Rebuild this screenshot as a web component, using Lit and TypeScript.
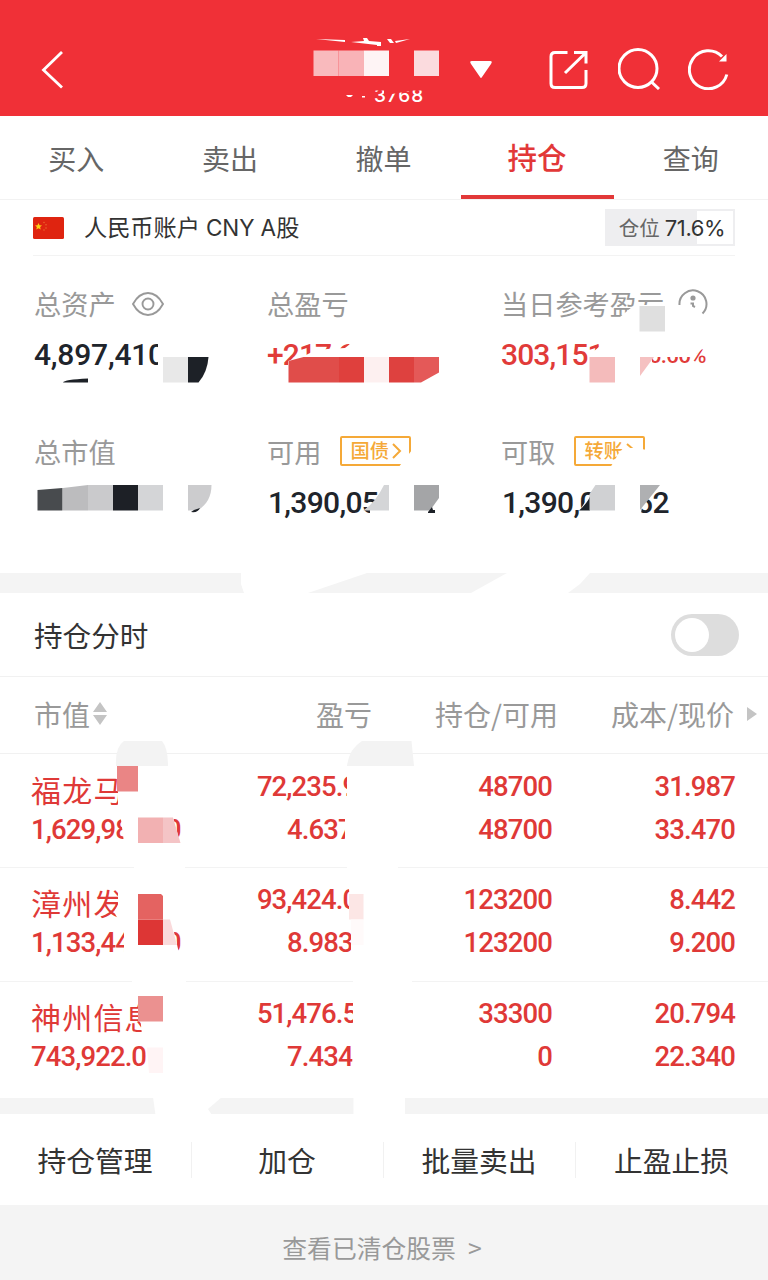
import { LitElement, html, svg, css } from "lit";
import { customElement } from "lit/decorators.js";

interface Holding {
  name: string;
  value: string;
  profit: string;
  rate: string;
  held: string;
  usable: string;
  cost: string;
  price: string;
}

const TABS = ["买入", "卖出", "撤单", "持仓", "查询"];
const ACTIONS = ["持仓管理", "加仓", "批量卖出", "止盈止损"];
const HOLDINGS: Holding[] = [
  { name: "福龙马", value: "1,629,989.00", profit: "72,235.90", rate: "4.637%", held: "48700", usable: "48700", cost: "31.987", price: "33.470" },
  { name: "漳州发", value: "1,133,440.00", profit: "93,424.00", rate: "8.983%", held: "123200", usable: "123200", cost: "8.442", price: "9.200" },
  { name: "神州信息", value: "743,922.0", profit: "51,476.50", rate: "7.434%", held: "33300", usable: "0", cost: "20.794", price: "22.340" },
];

/* Privacy blocks: [x, y, width, height, colour] */
const BLOCKS: [number, number, number, number, string][] = [
  [313.5, 50.5, 25, 25.5, "#f9babd"],
  [338.5, 50.5, 25, 25.5, "#f9b3b7"],
  [363.5, 50.5, 25.5, 25.5, "#fef4f5"],
  [414, 50.5, 25, 25.5, "#fbdbde"],
  [163, 357, 25, 25.5, "#e8e8e8"],
  [639.5, 306, 25.5, 25.5, "#dfdfdf"],
  [589.5, 357, 25.5, 25.5, "#f4bbbb"],
  [113, 485, 25, 25.5, "#1d2026"],
  [138, 485, 25, 25.5, "#d4d5d7"],
  [117, 766, 21, 25.5, "#ea8585"],
  [138, 817.5, 25, 25.5, "#f2b1b2"],
  [138, 919.5, 25, 25.5, "#dd3635"],
  [138, 996, 25, 25.5, "#eb9190"],
  [349, 894, 14.5, 25.5, "#fce6e5"],
  [351, 919.5, 12.5, 25.5, "#fffafa"],
];

const MASKS: string[] = [
  "158,335 240,335 240,384 158,384",
  "150,366 163,366 163,385 150,385",
  "288,361 304,356 312,352 327,349 345,348 350,344 364,342 460,336 460,384 288,384",
  "594,336 735,336 735,344 708,344 693,357 652,357 652,385 583,385 589,357 593,352 600,346 597,342",
  "614,322 632,307 639,305 665,305 690,306 690,332 614,332",
  "370,510 377,500 389,484 414,484 440,484 440,495 433,504 427,520 370,520",
  "580,510 596,485 640,485 640,520 580,520",
  "640,484 660,484 642,507 640,520",
  "241,573 367,573 308,593 244,593 241,584",
  "507,573 590,573 580,584 568,593 471,593",
  "153,1097 155.5,1115 212,1115 208,1109 222,1097",
  "353.5,1097 405,1097 405,1115 353.5,1115",
  "118,766 190,766 190,817 173,817 180,843 124,843 120,812 118,805",
  "134,860 185,860 185,875 134,875",
  "347,766 413,766 413,845 345,845 345,810 347,800",
  "347,860 398,860 398,875 347,875",
  "118,889 190,889 190,932 174,932 179,953 124,953 124,930 114,912 118,905",
  "132,975 186,975 186,990 132,990",
  "349,889 413,889 413,960 351,960 351,925",
  "353,975 412,975 412,1070 352,1070 353,1040",
  "138,996 170,996 170,1035 142,1035",
];

@customElement("app-root")
export class AppRoot extends LitElement {
  static styles = css`
    :host {
      display: block;
      position: relative;
      width: 768px;
      height: 1280px;
      overflow: hidden;
      background: #fff;
      font-family: "Noto Sans CJK SC", sans-serif;
      color: #333;
      line-height: 1;
    }
    * { box-sizing: border-box; }
    svg { display: block; flex: none; }
    .top { height: 116px; background: #f03037; display: flex; align-items: center; padding: 22px 38px 0 39px; color: #fff; }
    .title { flex: 1; display: flex; justify-content: flex-end; align-items: center; gap: 46px; padding-right: 56px; }
    .acct { font: 500 19px Inter, sans-serif; letter-spacing: 0.9px; padding-top: 52px; }
    .tools { display: flex; gap: 28px; }
    .tabs { height: 84px; display: flex; border-bottom: 1px solid #f2f2f2; font-size: 28px; color: #666; }
    .tab { flex: 1; text-align: center; padding: 28px 1px 0 0; border-bottom: 4px solid transparent; }
    .tab.on { color: #e23838; border-color: #e23838; font-size: 29.5px; padding-top: 26px; font-weight: 500; }
    .account { height: 56px; margin: 0 33px; display: flex; align-items: center; border-bottom: 1px solid #f3f3f3; font-size: 23.2px; }
    .account .label { flex: 1; padding-left: 20px; display: flex; align-items: baseline; gap: 6px; }
    .latin { font-family: Inter, sans-serif; font-size: 22.5px; }
    .ratio { width: 130px; height: 37px; border: 2px solid #eeeef0; background: linear-gradient(90deg, #eeeef0 90px, #fff 90px); display: flex; align-items: center; justify-content: center; gap: 5px; padding-left: 4px; font-size: 20.5px; color: #666; }
    .ratio .latin { font-size: 22px; color: #333; letter-spacing: -0.4px; }
    .metrics { height: 317px; padding: 29px 33px 0 34px; display: grid; grid-template-columns: 233px 234px 1fr; grid-template-rows: 148px 1fr; }
    .caption { height: 38px; display: flex; align-items: center; font-size: 27.2px; color: #999; }
    .num { font-family: Roboto, sans-serif; font-weight: 500; white-space: nowrap; }
    .amount { height: 62px; display: flex; align-items: center; font-size: 30px; letter-spacing: -0.7px; color: #20242b; padding: 2px 0 0 1px; }
    .amount.total { letter-spacing: -0.2px; padding-left: 0; }
    .amount.red { color: #e13b39; letter-spacing: -0.9px; padding-left: 0; padding-top: 1px; }
    .pct { font-size: 22px; margin-left: 45px; letter-spacing: -0.5px; padding-top: 3px; }
    .eye { margin-left: 16px; }
    .info { margin-left: 14px; }
    .tag { width: 71px; height: 30px; margin: -3px 0 0 19px; border: 2px solid #f5a938; color: #f5a938; font-size: 19.3px; font-weight: 500; display: flex; align-items: center; padding-left: 8px; gap: 1px; border-radius: 2px; }
    .band { height: 20px; background: #f4f4f4; }
    .band.thin { height: 16px; }
    .minute { height: 84px; border-bottom: 1px solid #f1f1f1; padding: 0 29px 0 34px; display: flex; justify-content: space-between; align-items: center; font-size: 28.6px; }
    .minute span { padding-top: 2px; }
    .switch { width: 68px; height: 42px; border-radius: 21px; background: #ddd; padding: 4px; }
    .knob { width: 34px; height: 34px; border-radius: 50%; background: #fff; }
    .cols { display: grid; grid-template-columns: 166px 175px 180px 183px; padding-left: 31px; }
    .head { height: 77px; padding-bottom: 3px; border-bottom: 1px solid #f1f1f1; align-items: center; font-size: 28px; color: #999; grid-template-columns: 166px 175px 186px 176px 1fr; }
    .head .first { padding-left: 3px; display: flex; align-items: center; gap: 2px; }
    .right { text-align: right; }
    .more { margin-left: 13px; }
    .row { height: 114px; border-bottom: 1px solid #f3f3f3; color: #df3937; font-size: 27.5px; letter-spacing: -0.9px; padding-top: 10px; align-content: start; }
    .row.first { padding-top: 11px; }
    .row.last { height: 116px; border-bottom: 0; }
    .row div { height: 43px; line-height: 43px; }
    .row .name { font-size: 30px; letter-spacing: 1.2px; padding-top: 3px; font-weight: 400; font-family: "Noto Sans CJK SC", sans-serif; }
    .actions { height: 91px; display: grid; grid-template-columns: repeat(4, 1fr); font-size: 28.8px; align-items: center; }
    .actions div { height: 36px; line-height: 36px; text-align: center; border-right: 1px solid #f1f1f1; padding-right: 1px; }
    .actions div:last-child { border: 0; }
    .foot { height: 76px; background: #f4f4f4; color: #999; display: flex; justify-content: center; align-items: center; gap: 12px; font-size: 24.8px; padding: 8px 4px 0 0; }
    .redact { position: absolute; inset: 0; pointer-events: none; }
  `;

  private redaction() {
    return html`<svg class="redact" width="768" height="1280" viewBox="0 0 768 1280">
      <rect x="340" y="78" width="92" height="12.500" fill="#f03037" />
      <path d="M384 96v-8h28v3l-8 1-12 2z" fill="#f03037" />
      <path d="M346 95l7 0-2 2h-3zM362 96h3v1.500h-3z" fill="#fff" />
      <path d="M316 39l29 1v2zM351 42l13-1-1-3 4 0 2 3 12 1v4h-4v-1zM387 39l4 0 3 4h-4zM395 41l15-2-14 4z" fill="#fff" />
      ${MASKS.map((p) => svg`<polygon points=${p} fill="#fff" />`)}
      ${BLOCKS.map(([x, y, w, h, c]) => svg`<rect x=${x} y=${y} width=${w} height=${h} fill=${c} />`)}
      <path d="M188 357h20.500q-1 15-10 25.500H188z" fill="#1d2127" />
      <path d="M63 382.500q1-3 25-4v4z" fill="#1d2127" />
      <path d="M288.500 361l15-4H339v25.500H288.500z" fill="#e04d4a" />
      <path d="M339 357h25v25.500H339z" fill="#df403d" />
      <path d="M364 357h25v25.500H364z" fill="#fdf0f0" />
      <path d="M389 357h25v25.500H389z" fill="#de413f" />
      <path d="M414 357h25v15.500l-18 10H414z" fill="#e45958" />
      <path d="M640 357h14l-14 19z" fill="#f5c1c1" />
      <path d="M37.500 490l25-2v22.500H37.500z" fill="#484b4e" />
      <path d="M63 488l25-3v25.500H63z" fill="#bcbcbe" />
      <path d="M88 485h25v25.500H88z" fill="#cacacc" />
      <path d="M188 485h23.500q0 17-14 25.500H188z" fill="#ccccce" />
      <path d="M200 508q-2 5-9 4l3-2z" fill="#1d2127" />
      <path d="M363 510.500q12-7 21-25.500h5v25.500z" fill="#d4d5d7" />
      <path d="M414 485h25v13l-9 12.500H414z" fill="#a4a5a7" />
      <path d="M428 512l4-5 1 3h2v3h-7z" fill="#1d2127" />
      <path d="M579 510.500q8-7 11-14v14z" fill="#1d2127" />
      <path d="M589.500 494l6-9H615v25.500H589.500z" fill="#d0d1d3" />
      <path d="M640 485h20l-20 25z" fill="#afb0b2" />
      <path d="M398 468l14-18v18z" fill="#fff" />
      <path d="M610 468l10-17 6-3h10l11 2v18z" fill="#fff" />
      <path d="M116 766q-1-19 8-25h38q6 7 6 25z" fill="#f3f3f3" />
      <path d="M347 766q2-17 15-25h49.500l2.500 25z" fill="#f3f3f3" />
      <path d="M163 817.500h10l7.500 25.500H163z" fill="#f4c4c6" />
      <path d="M138 894h23l2 2v23.500h-25z" fill="#e46361" />
      <path d="M163 919.500h7l7 25.500h-14z" fill="#fadadb" />
      <path d="M147 1047.500h16v25.500h-14z" fill="#fff4f5" />
    </svg>`;
  }

  render() {
    return html`
      <div class="top">
        <svg width="26" height="40" viewBox="0 0 26 40" fill="none" stroke="#fff" stroke-width="2.800"><path d="M23 3L4.500 21 23 38.500" /></svg>
        <div class="title">
          <span class="acct">3768</span>
          <svg width="22" height="18" viewBox="0 0 22 18" fill="#fff"><path d="M2 1h18q3 0 1 3l-9 13q-1 2-2 0L1 4q-2-3 1-3z" /></svg>
        </div>
        <div class="tools">
          <svg width="42" height="42" viewBox="0 0 42 42" fill="none" stroke="#fff" stroke-width="3"><path d="M19.500 4.500H7q-4 0-4 4v27q0 4 4 4h27q4 0 4-4V22M17 25L37 5.500M26 4.500h12v11" /></svg>
          <svg width="42" height="42" viewBox="0 0 42 42" fill="none" stroke="#fff" stroke-width="3"><circle cx="20" cy="20.500" r="19" /><path d="M33 33.500l8 7.500" /></svg>
          <svg width="42" height="42" viewBox="0 0 42 42" fill="none" stroke="#fff" stroke-width="3"><path d="M38.800 26.500A19 19 0 1 1 34 8.500" /><path d="M38.500 6v7.500H31z" fill="#fff" stroke="none" /></svg>
        </div>
      </div>
      <div class="tabs">${TABS.map((t) => html`<div class="tab ${t === "持仓" ? "on" : ""}">${t}</div>`)}</div>
      <div class="account">
        <svg width="31" height="22" viewBox="0 0 31 22"><rect width="31" height="22" rx="1.500" fill="#df2410" /><path d="M5.500 6l1 2.200 2.500.2-1.900 1.600.6 2.500-2.200-1.300-2.200 1.300.6-2.500L2 8.400l2.500-.2z" fill="#fbd116" /><g fill="#e9642b"><circle cx="11" cy="5.500" r=".8" /><circle cx="13" cy="7.800" r=".8" /><circle cx="13" cy="11" r=".8" /><circle cx="11" cy="13" r=".8" /></g></svg>
        <div class="label"><span>人民币账户</span><span class="latin">CNY</span><span><span class="latin">A</span>股</span></div>
        <div class="ratio"><span>仓位</span><span class="latin">71.6%</span></div>
      </div>
      <div class="metrics">
        <div>
          <div class="caption">总资产
            <svg class="eye" width="32" height="26" viewBox="0 0 32 26" fill="none" stroke="#999" stroke-width="1.900"><path d="M1 13Q7 2 16 2t15 11Q25 24 16 24T1 13z" /><circle cx="16" cy="13" r="5.500" /></svg>
          </div>
          <div class="amount num total">4,897,410</div>
        </div>
        <div><div class="caption">总盈亏</div><div class="amount num red">+217,6</div></div>
        <div>
          <div class="caption">当日参考盈亏
            <svg class="info" width="30" height="30" viewBox="0 0 30 30" fill="none" stroke="#999" stroke-width="2"><path d="M1.500 16A13.500 13.500 0 1 1 24.500 24.500" /><circle cx="15" cy="9" r="2.600" fill="#999" stroke="none" /><path d="M12.500 14.500h2.500v2.500l2 1" /></svg>
          </div>
          <div class="amount num red">303,151<span class="pct">6.66%</span></div>
        </div>
        <div><div class="caption">总市值</div></div>
        <div><div class="caption">可用<span class="tag">国债<svg width="12" height="18" viewBox="0 0 12 18" fill="none" stroke="#f5a938" stroke-width="2"><path d="M3 2l7 7-7 7" /></svg></span></div><div class="amount num">1,390,052.52</div></div>
        <div><div class="caption">可取<span class="tag">转账<svg width="12" height="18" viewBox="0 0 12 18" fill="none" stroke="#f5a938" stroke-width="2"><path d="M3 2l7 6" /></svg></span></div><div class="amount num">1,390,052.52</div></div>
      </div>
      <div class="band"></div>
      <div class="minute"><span>持仓分时</span><div class="switch"><div class="knob"></div></div></div>
      <div class="cols head">
        <div class="first">市值<svg width="16" height="24" viewBox="0 0 16 24" fill="#c4c4c4"><path d="M8 0l7 10H1zM1 13h14L8 23z" /></svg></div>
        <div class="right">盈亏</div>
        <div class="right">持仓/可用</div>
        <div class="right">成本/现价</div>
        <svg class="more" width="11" height="14" viewBox="0 0 11 14" fill="#c4c4c4"><path d="M0 0l10 7-10 7z" /></svg>
      </div>
      ${HOLDINGS.map((h, i) => html`
        <div class="cols row num ${i === 0 ? "first" : i === 2 ? "last" : ""}">
          <div class="name">${h.name}</div><div class="right">${h.profit}</div><div class="right">${h.held}</div><div class="right">${h.cost}</div>
          <div>${h.value}</div><div class="right">${h.rate}</div><div class="right">${h.usable}</div><div class="right">${h.price}</div>
        </div>`)}
      <div class="band thin"></div>
      <div class="actions">${ACTIONS.map((a) => html`<div>${a}</div>`)}</div>
      <div class="foot"><span>查看已清仓股票</span><span>&gt;</span></div>
      ${this.redaction()}
    `;
  }
}
